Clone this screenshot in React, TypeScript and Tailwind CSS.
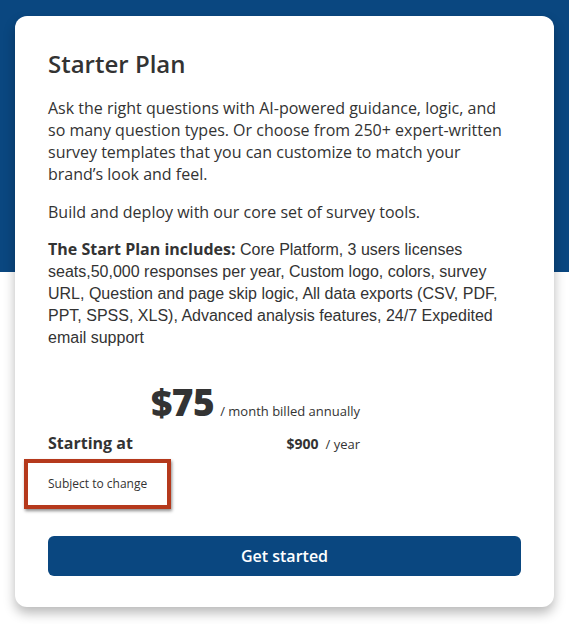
import React from "react"

const sans = { fontFamily: '"Open Sans", "Noto Sans", sans-serif' }

export default function App() {
  return (
    <div
      className="min-h-[624px] w-full bg-[linear-gradient(to_bottom,#0a4780_272px,#ffffff_272px)] px-[15px] pt-[16px] pb-[16px]"
      style={sans}
    >
      <div className="rounded-[12px] bg-white px-[33px] pt-[32px] pb-[31px] text-[#333333] shadow-[0_6px_12px_rgba(0,0,0,0.28)]">
        <h1 className="text-[24px] leading-[32px] font-semibold text-[#333333]">Starter Plan</h1>

        <p className="mt-[17px] max-w-[462px] text-[16px] leading-[22px]">
          Ask the right questions with AI-powered guidance, logic, and so many question types. Or choose from 250+
          expert-written survey templates that you can customize to match your brand’s look and feel.
        </p>

        <p className="mt-[16px] max-w-[462px] text-[16px] leading-[22px]">
          Build and deploy with our core set of survey tools.
        </p>

        <p
          className="mt-[15px] max-w-[462px] text-[16px] leading-[22px]"
          style={{ fontFamily: '"Liberation Sans", Arial, sans-serif' }}
        >
          <span className="font-bold" style={sans}>
            The Start Plan includes:
          </span>{" "}
          Core Platform, 3 users licenses seats,50,000 responses per year, Custom logo, colors, survey URL, Question and
          page skip logic, All data exports (CSV, PDF, PPT, SPSS, XLS), Advanced analysis features, 24/7 Expedited
          email support
        </p>

        <div className="mt-[33px] w-[312px]">
          <div className="flex items-baseline justify-end gap-[6px]">
            <span className="text-[37px] leading-[40px] font-extrabold tracking-[-0.5px] text-[#333333]">$75</span>
            <span className="text-[13px] text-[#333333]">/ month billed annually</span>
          </div>
          <div className="mt-[10px] flex items-baseline justify-between">
            <span className="text-[16px] leading-[22px] font-bold">Starting at</span>
            <span className="flex items-baseline gap-[7px]">
              <span className="text-[14px] font-bold">$900</span>
              <span className="text-[13px]">/ year</span>
            </span>
          </div>
        </div>

        <div className="mt-[4px] -ml-[24px] flex h-[50px] w-[147px] items-center border-4 border-[#b5391c] pl-[20px] text-[12px] text-[#333333] shadow-[1px_2px_3px_rgba(0,0,0,0.45)]">
          Subject to change
        </div>

        <button className="mt-[27px] flex h-[40px] w-full items-center justify-center rounded-[6px] bg-[#0a4780] text-[16px] font-semibold text-white">
          Get started
        </button>
      </div>
    </div>
  )
}
